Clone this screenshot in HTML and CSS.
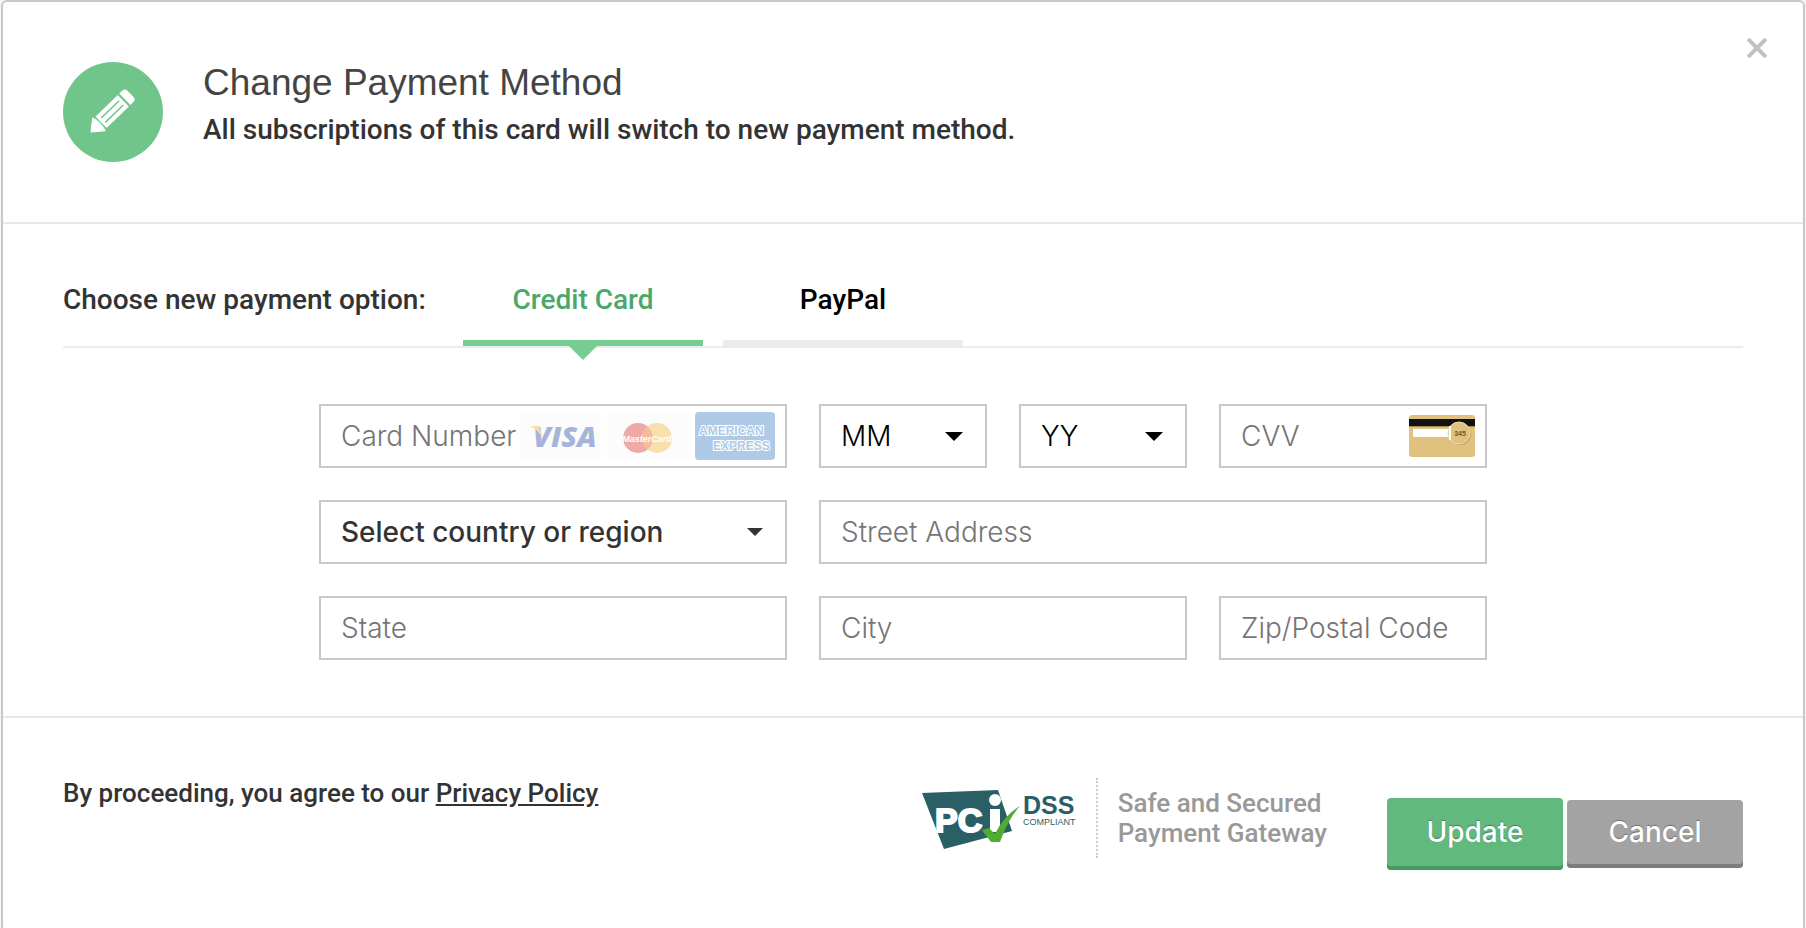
FILE: index.html
```
<!DOCTYPE html>
<html lang="en">
<head>
    <meta charset="UTF-8">
    <meta name="viewport" content="width=device-width, initial-scale=1.0">
    <title>Change Payment Method</title>
    <link rel="stylesheet" href="styles.css">
</head>
<body>
    <div class="dialog" role="dialog" aria-labelledby="dialogTitle">
        <button type="button" class="close" aria-label="Close">
            <svg width="20" height="20" viewBox="0 0 20 20"><path d="M1 1L19 19M19 1L1 19" stroke="#c1c1c1" stroke-width="4"/></svg>
        </button>

        <div class="dialog-head">
            <div class="head-icon">
                <svg width="100" height="100" viewBox="0 0 100 100">
                    <g transform="translate(28 70) rotate(-44)">
                        <path d="M0 0L11 -9Q14 0 11 9Z" fill="#fff" stroke="#fff" stroke-linejoin="round"/>
                        <rect x="14" y="-8" width="31" height="16" fill="#fff"/>
                        <path d="M17 -3H42M17 3H42" stroke="#6fc58a" stroke-width="1.5"/>
                        <path d="M47 -8H51Q55 -8 55 -4V4Q55 8 51 8H47Z" fill="#fff"/>
                    </g>
                </svg>
            </div>
            <div>
                <h1 class="title" id="dialogTitle">Change Payment Method</h1>
                <p class="subtitle">All subscriptions of this card will switch to new payment method.</p>
            </div>
        </div>

        <form>
            <div class="dialog-body">
                <div class="tabs">
                    <span class="tabs-label">Choose new payment option:</span>
                    <button type="button" class="tab active">Credit Card</button>
                    <button type="button" class="tab">PayPal</button>
                </div>

                <div class="fields">
                    <div class="field">
                        <input type="text" name="card" placeholder="Card Number" aria-label="Card Number">
                        <div class="cards">
                            <svg width="80" height="48" viewBox="0 0 80 48">
                                <rect width="80" height="48" rx="4" fill="#fcfcfc"/>
                                <text x="12" y="35" font-size="29" class="visa">VISA</text>
                                <path d="M9 14H18L22 27Q18 18 9 14Z" fill="#f8dca3"/>
                            </svg>
                            <svg width="80" height="48" viewBox="0 0 80 48">
                                <rect width="80" height="48" rx="4" fill="#fcfcfc"/>
                                <circle cx="30" cy="26" r="15" fill="#efa9a7"/>
                                <circle cx="49" cy="26" r="15" fill="#f8dfac"/>
                                <path d="M39.500 14.400A15 15 0 0 1 39.500 37.600A15 15 0 0 1 39.500 14.400Z" fill="#f2bd9c"/>
                                <text x="39" y="30" font-size="9" text-anchor="middle" class="mc">MasterCard</text>
                            </svg>
                            <svg width="80" height="48" viewBox="0 0 80 48">
                                <rect width="80" height="48" rx="4" fill="#aecae6"/>
                                <text x="4" y="23" font-size="12" class="amex">AMERICAN</text>
                                <text x="18" y="38" font-size="12" class="amex">EXPRESS</text>
                            </svg>
                        </div>
                    </div>
                    <div class="field select">
                        <select name="month" aria-label="Expiry month"><option>MM</option></select>
                    </div>
                    <div class="field select">
                        <select name="year" aria-label="Expiry year"><option>YY</option></select>
                    </div>
                    <div class="field">
                        <input type="text" name="cvv" placeholder="CVV" aria-label="CVV">
                        <svg width="66" height="42" viewBox="0 0 66 42">
                            <rect width="66" height="42" rx="3" fill="#e0c17e"/>
                            <rect y="4" width="66" height="7" fill="#111"/>
                            <rect y="11" width="66" height="1" fill="#a3874e"/>
                            <rect x="4" y="14" width="38" height="8" fill="#fff"/>
                            <circle cx="51" cy="19" r="11" fill="#b99c5e"/>
                            <circle cx="50" cy="18" r="11" fill="#e0c17e" stroke="#efdcae"/>
                            <path d="M41 11V25" stroke="#fff" stroke-width="2"/>
                            <text x="51" y="21" font-size="7" text-anchor="middle" class="cvv">345</text>
                        </svg>
                    </div>

                    <div class="field select country">
                        <select name="country" aria-label="Country or region"><option>Select country or region</option></select>
                    </div>
                    <div class="field span3">
                        <input type="text" name="street" placeholder="Street Address" aria-label="Street Address">
                    </div>

                    <div class="field">
                        <input type="text" name="state" placeholder="State" aria-label="State">
                    </div>
                    <div class="field span2">
                        <input type="text" name="city" placeholder="City" aria-label="City">
                    </div>
                    <div class="field">
                        <input type="text" name="zip" placeholder="Zip/Postal Code" aria-label="Zip/Postal Code">
                    </div>
                </div>
            </div>

            <div class="dialog-foot">
                <p class="agree">By proceeding, you agree to our <a href="#">Privacy Policy</a></p>
                <div class="pci">
                    <svg width="154" height="66" viewBox="0 0 154 66">
                        <path d="M0 8L76 5L90 46L22 64Z" fill="#2b5f66"/>
                        <text x="13" y="47" font-size="34" class="pci-text">PC</text>
                        <circle cx="73" cy="15" r="6" fill="#fff"/>
                        <path d="M68 24H78V47H68Z" fill="#fff"/>
                        <path d="M60 45L67 43L73 49Q82 30 98 21Q86 34 78 57H69Z" fill="#4fae32"/>
                        <text x="101" y="29" font-size="25" class="dss">DSS</text>
                        <text x="101" y="40" font-size="9" class="compliant">COMPLIANT</text>
                    </svg>
                </div>
                <p class="secured">Safe and Secured<br>Payment Gateway</p>
                <div class="buttons">
                    <button type="submit" class="button update">Update</button>
                    <button type="button" class="button cancel">Cancel</button>
                </div>
            </div>
        </form>
    </div>
</body>
</html>
```
FILE: styles.css
```
* {
    margin: 0;
    padding: 0;
    box-sizing: border-box;
}
body {
    background: #f5f5f5;
    color: #333;
    font-family: Roboto, "Liberation Sans", sans-serif;
    font-size: 28px;
    font-weight: 500;
    overflow: hidden;
}
button,
input,
select {
    border: 0;
    background: none;
    color: inherit;
    font: inherit;
}
button {
    cursor: pointer;
}
svg {
    display: block;
    flex: none;
}
.dialog {
    position: relative;
    min-height: calc(100vh + 2px);
    margin: 0 1px;
    border: 2px solid #c8c8c8;
    border-radius: 6px;
    background: #fff;
}
.close {
    position: absolute;
    top: 36px;
    right: 36px;
}

/* header */
.dialog-head {
    display: flex;
    gap: 40px;
    padding: 60px;
    border-bottom: 2px solid #e8e8e8;
}
.head-icon {
    flex: none;
    width: 100px;
    height: 100px;
    border-radius: 50%;
    background: #6fc58a;
}
.title {
    color: #444;
    font-family: "Liberation Sans", sans-serif;
    font-size: 37px;
    font-weight: 400;
    line-height: 42px;
}
.subtitle {
    margin-top: 4px;
    line-height: 44px;
}

/* payment option */
.dialog-body {
    padding: 36px 60px 56px;
}
.tabs {
    display: flex;
    border-bottom: 2px solid #ececec;
    line-height: 80px;
}
.tabs-label {
    width: 400px;
}
.tab {
    position: relative;
    width: 240px;
    margin-right: 20px;
    border-bottom: 6px solid #ececec;
    color: #000;
}
.tab.active {
    border-color: #77cd91;
    color: #4aa86b;
}
.tab.active::after {
    content: "";
    position: absolute;
    top: 100%;
    left: 50%;
    margin: 6px 0 0 -14px;
    border: 14px solid transparent;
    border-top-color: #77cd91;
    border-bottom: 0;
}
.fields {
    display: grid;
    grid-template-columns: 468fr 168fr 168fr 268fr;
    gap: 32px;
    max-width: 1168px;
    margin: 56px auto 0;
}
.field {
    display: flex;
    align-items: center;
    min-width: 0;
    height: 64px;
    padding-right: 10px;
    border: 2px solid #c8c8c8;
    font-family: Inter, "Liberation Sans", sans-serif;
    font-weight: 300;
}
.field input,
.field select {
    flex: 1;
    width: 100%;
    min-width: 0;
    height: 60px;
    padding-left: 20px;
    outline: none;
}
.field input::placeholder {
    color: #757575;
    opacity: 1;
}
.span2 {
    grid-column: span 2;
}
.span3 {
    grid-column: span 3;
}
.cards {
    display: flex;
    gap: 7px;
}
.select {
    padding-right: 22px;
    color: #000;
}
.select select {
    appearance: none;
}
.select::after {
    content: "";
    border: 9px solid transparent;
    border-top-color: currentColor;
    border-bottom: 0;
}
.country {
    color: #333;
    font-weight: 500;
}
.country::after {
    border-width: 8px 8px 0;
}

/* logos */
.visa {
    fill: #a5b5da;
    font-family: "Open Sans", sans-serif;
    font-style: italic;
    font-weight: 800;
}
.mc {
    fill: #fff;
    font-family: "Liberation Sans", sans-serif;
    font-style: italic;
    font-weight: 700;
}
.amex {
    fill: #aecae6;
    stroke: #fff;
    stroke-width: 2px;
    paint-order: stroke;
    font-family: "Liberation Sans", sans-serif;
    font-weight: 700;
}
.cvv {
    fill: #6b5a33;
    font-family: "Liberation Sans", sans-serif;
    font-weight: 700;
}
.pci-text {
    fill: #fff;
    stroke: #fff;
    stroke-width: 2px;
    font-family: "Liberation Sans", sans-serif;
    font-weight: 700;
}
.dss,
.compliant {
    fill: #2b5f66;
    font-family: "Liberation Sans", sans-serif;
    font-weight: 700;
}
.compliant {
    font-weight: 400;
}

/* footer */
.dialog-foot {
    display: flex;
    align-items: flex-start;
    padding: 60px;
    border-top: 2px solid #e8e8e8;
    font-size: 26px;
    line-height: 30px;
}
.agree {
    flex: 1;
}
.agree a {
    color: inherit;
}
.pci {
    display: flex;
    align-items: center;
    height: 80px;
    padding-right: 20px;
    border-right: 2px dotted #ccc;
}
.secured {
    padding: 10px 60px 10px 20px;
    color: #999;
}
.buttons {
    display: flex;
    align-items: center;
    gap: 4px;
    margin-top: 20px;
}
.button {
    width: 176px;
    height: 72px;
    padding-bottom: 4px;
    border-radius: 4px;
    background: #62b97e;
    box-shadow: inset 0 -4px #469a5e;
    color: #fff;
    font-family: Inter, "Liberation Sans", sans-serif;
    font-size: 28px;
    text-shadow: 0 -1px 1px rgba(0, 0, 0, .3);
}
.cancel {
    height: 68px;
    background: #a3a3a3;
    box-shadow: inset 0 -4px #7d7d7d;
}
```
